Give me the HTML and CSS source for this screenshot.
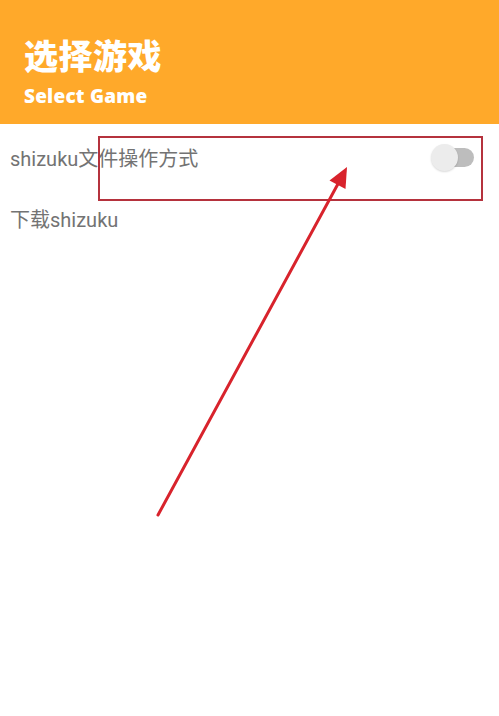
FILE: index.html
```html
<!DOCTYPE html>
<html lang="zh">
<head>
<meta charset="utf-8">
<link rel="stylesheet" href="styles.css">
</head>
<body>
<div class="page">
  <header class="header">
    <div class="title">选择游戏</div>
    <div class="subtitle">Select Game</div>
  </header>
  <div class="list">
    <div class="row">
      <span class="label">shizuku文件操作方式</span>
      <span class="switch"><span class="track"></span><span class="thumb"></span></span>
    </div>
    <div class="row">
      <span class="label">下载shizuku</span>
    </div>
  </div>
  <div class="highlight"></div>
  <svg class="arrow" width="499" height="716" viewBox="0 0 499 716">
    <line x1="158" y1="515" x2="339" y2="182" stroke="#d8232c" stroke-width="3" stroke-linecap="round"/>
    <polygon points="347,167 345.5,189 329.5,180.5" fill="#d8232c"/>
  </svg>
</div>
</body>
</html>
```

FILE: styles.css
```css
html, body {
  margin: 0;
  padding: 0;
  background: #ffffff;
}
.page {
  position: relative;
  width: 499px;
  height: 716px;
  overflow: hidden;
  font-family: Roboto, "Noto Sans CJK SC", sans-serif;
}
.header {
  height: 124px;
  background: #ffa92a;
  box-sizing: border-box;
  padding: 32px 0 0 24px;
  color: #ffffff;
  display: flex;
  flex-direction: column;
}
.title {
  font-family: "Noto Sans CJK SC", sans-serif;
  font-weight: 900;
  font-size: 34px;
  line-height: 46px;
  letter-spacing: 0.5px;
}
.subtitle {
  font-family: "Open Sans", "Noto Sans", sans-serif;
  font-weight: 800;
  font-size: 19px;
  line-height: 24px;
  margin-top: 6px;
  letter-spacing: 0.2px;
}
.list {
  padding-top: 3px;
}
.row {
  height: 61px;
  display: flex;
  align-items: center;
  justify-content: space-between;
  padding: 0 24px 0 10px;
}
.label {
  font-family: Roboto, "Noto Sans CJK SC", sans-serif;
  font-size: 20px;
  color: #737373;
}
.switch {
  position: relative;
  width: 43px;
  height: 27px;
  margin-right: 1px;
}
.track {
  position: absolute;
  right: 0;
  top: 4px;
  width: 38px;
  height: 19px;
  border-radius: 10px;
  background: #bdbdbd;
}
.thumb {
  position: absolute;
  left: 0;
  top: 0;
  width: 27px;
  height: 27px;
  border-radius: 50%;
  background: #ececec;
  box-shadow: 0 1px 2px rgba(0,0,0,0.15);
}
.highlight {
  position: absolute;
  left: 98px;
  top: 136px;
  width: 381px;
  height: 61px;
  border: 2px solid #b5323d;
}
.arrow {
  position: absolute;
  left: 0;
  top: 0;
}
```
